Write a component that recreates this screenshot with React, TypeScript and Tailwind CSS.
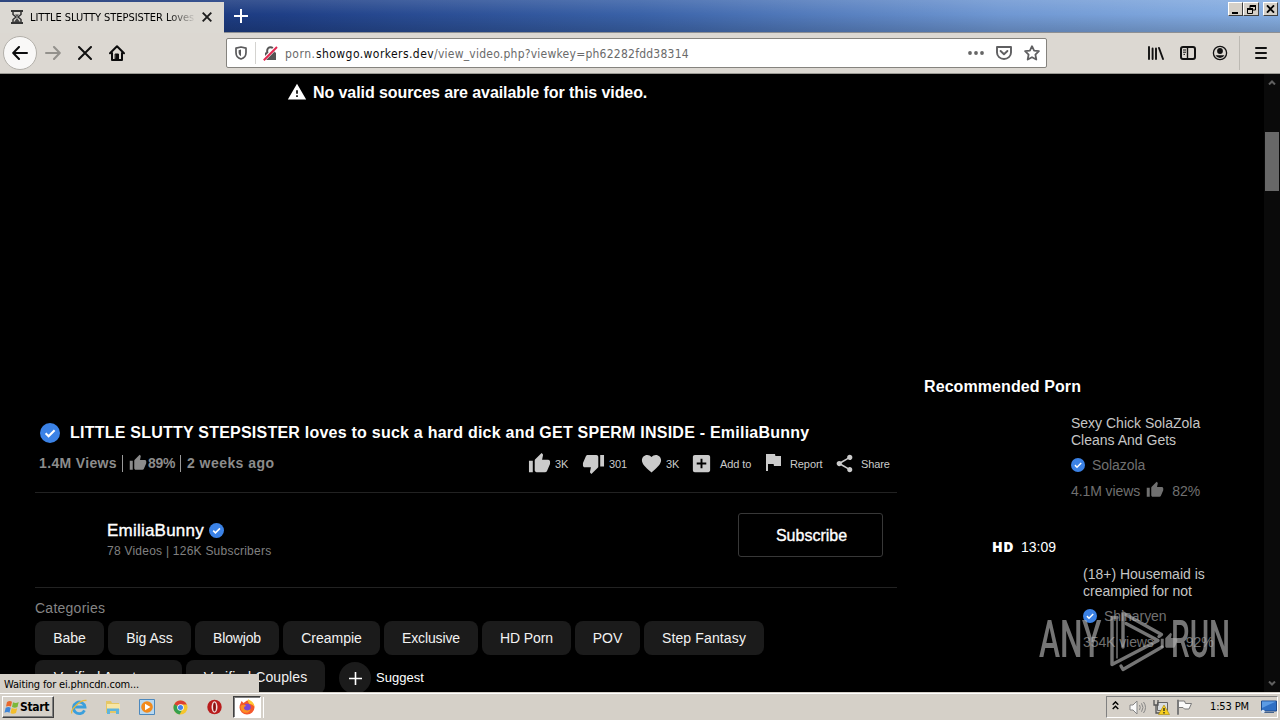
import type { ReactNode } from "react";
import {
  MdAddBox,
  MdFavorite,
  MdFlag,
  MdShare,
  MdThumbDown,
  MdThumbUp,
  MdWarning,
} from "react-icons/md";

function Verified({ size }: { size: number }) {
  return (
    <svg width={size} height={size} viewBox="0 0 20 20" className="shrink-0">
      <circle cx="10" cy="10" r="10" fill="#3b82e6" />
      <path d="M5.6 10.2l3 3 6-6" fill="none" stroke="#fff" strokeWidth="2.1" />
    </svg>
  );
}

function WindowButton({ children, className }: { children: ReactNode; className: string }) {
  return (
    <div className={`flex h-[14px] items-center justify-center border border-t-white border-l-white border-r-[#404040] border-b-[#404040] bg-[#d5d0c8] ${className}`}>
      {children}
    </div>
  );
}

function TitleBar() {
  return (
    <div className="flex h-[33px] shrink-0 items-start border-b border-[#8d8f93] bg-[linear-gradient(to_bottom,rgba(255,255,255,.12),rgba(255,255,255,0)_45%,rgba(0,0,0,.16)),linear-gradient(to_right,#15306f_0%,#1f3f86_22%,#3a62a8_50%,#6f97d2_78%,#86aee2_100%)]">
      <div className="mt-[2px] flex h-[31px] w-[224px] shrink-0 items-center bg-[#dcd9d3] font-['DejaVu_Sans_Condensed','DejaVu_Sans',sans-serif] text-[11px]">
        <svg width="12" height="14" viewBox="0 0 12 14" className="-mt-px ml-[11px]" fill="none" stroke="#333" strokeWidth="1.5">
          <path d="M0 1h12M0 13h12" strokeWidth="2" />
          <path d="M2 2v2.5L5 7 2 9.5V12M10 2v2.5L7 7l3 2.5V12" />
          <path d="M4 4.5h4L6 6.5zM6 8l3 4H3z" fill="#444" stroke="none" />
        </svg>
        <span className="mt-px ml-[7px] w-[166px] bg-linear-to-r from-black from-80% to-[#dcd9d3] bg-clip-text tracking-[-0.05px] whitespace-nowrap text-transparent">
          LITTLE SLUTTY STEPSISTER Loves
        </span>
        <svg width="10" height="10" viewBox="0 0 10 10" className="-mt-px ml-[6px]" stroke="#1c1c1c" strokeWidth="1.9">
          <path d="M.7.7l8.6 8.6M9.3.7L.7 9.3" />
        </svg>
      </div>
      <svg width="14" height="14" viewBox="0 0 14 14" className="mt-[9px] ml-[10px]" stroke="#fff" strokeWidth="2">
        <path d="M7 0v14M0 7h14" />
      </svg>
      <div className="mt-[2px] mr-[2px] ml-auto flex">
        <WindowButton className="w-[15px]">
          <svg width="9" height="9" viewBox="0 0 9 9"><path d="M1 7h6v2H1z" /></svg>
        </WindowButton>
        <WindowButton className="w-[16px]">
          <svg width="9" height="9" viewBox="0 0 9 9" fill="none" stroke="#000">
            <path d="M3 3V.5h5.500V5H6M.5 3.500h5v5h-5z" />
            <path d="M3 1h6M0 4h6" strokeWidth="2" />
          </svg>
        </WindowButton>
        <WindowButton className="ml-[4px] w-[15px]">
          <svg width="9" height="8" viewBox="0 0 9 8" stroke="#000" strokeWidth="1.8"><path d="M1 .3l7 7.400M8 .3L1 7.700" /></svg>
        </WindowButton>
      </div>
    </div>
  );
}

function NavBar() {
  return (
    <div className="flex h-[41px] shrink-0 items-center border-b border-[#9b9a94] bg-[#dcd8d2]">
      <div className="ml-[3px] flex size-[34px] shrink-0 items-center justify-center rounded-full border border-[#b3b0aa] bg-[#f9f8f7]">
        <svg width="16" height="14" viewBox="0 0 16 14" fill="none" stroke="#0c0c0d" strokeWidth="2" strokeLinecap="round" strokeLinejoin="round">
          <path d="M15 7H1.500M7 1L1.200 7 7 13" />
        </svg>
      </div>
      <svg width="16" height="14" viewBox="0 0 16 14" className="ml-[8px]" fill="none" stroke="#93918c" strokeWidth="2" strokeLinecap="round" strokeLinejoin="round">
        <path d="M1 7h13.500M9 1l5.800 6L9 13" />
      </svg>
      <svg width="14" height="14" viewBox="0 0 14 14" className="ml-[17px]" stroke="#111" strokeWidth="2" strokeLinecap="round">
        <path d="M1 1l12 12M13 1L1 13" />
      </svg>
      <svg width="16" height="16" viewBox="0 0 16 16" className="ml-[17px]" fill="none" stroke="#0c0c0d" strokeWidth="2" strokeLinejoin="round" strokeLinecap="round">
        <path d="M1 8.200L8 1.300l7 6.900M3 8v7h10V8" />
        <path d="M6.500 9h3v5h-3z" fill="#0c0c0d" strokeWidth="1" />
      </svg>
      <div className="ml-[101px] flex h-[30px] w-[821px] shrink-0 items-center rounded-[2px] border border-[#85837e] bg-white font-['DejaVu_Sans_Condensed','DejaVu_Sans',sans-serif] text-[12px] whitespace-nowrap text-[#6a6a6a]">
        <svg width="12" height="14" viewBox="0 0 12 14" className="ml-[8px]" fill="none" stroke="#5a5a5c" strokeWidth="1.700">
          <path d="M6 1L1 2.200v4.300C1 10 3.500 12.300 6 13c2.500-.7 5-3 5-6.500V2.200z" strokeLinejoin="round" />
          <path d="M6 3.600v6.600C4.500 9.500 3.600 8 3.600 6.500V4.200z" fill="#5a5a5c" stroke="none" />
        </svg>
        <span className="ml-[8px] h-[22px] w-px bg-[#d4d3d0]" />
        <svg width="15" height="15" viewBox="0 0 15 15" className="ml-[7px]" fill="none">
          <path d="M4.200 7V4.500a3.300 3.300 0 016.600 0V7" stroke="#555" strokeWidth="2" />
          <path d="M2 6.500h11V14H2z" fill="#555" />
          <path d="M.3 14.200L13.600.9" stroke="#fff" strokeWidth="3.600" />
          <path d="M.8 14.200L14 1" stroke="#e22850" strokeWidth="2" />
        </svg>
        <span className="mt-px ml-[7px] w-[31px] tracking-[0.5px]">porn.</span>
        <span className="mt-px w-[118px] tracking-[0.43px] text-[#0c0c0d]">showgo.workers.dev</span>
        <span className="mt-px tracking-[0.24px]">/view_video.php?viewkey=ph62282fdd38314</span>
        <svg width="16" height="4" viewBox="0 0 16 4" className="ml-auto" fill="#666">
          <circle cx="2" cy="2" r="1.900" /><circle cx="8" cy="2" r="1.900" /><circle cx="14" cy="2" r="1.900" />
        </svg>
        <svg width="16" height="14" viewBox="0 0 16 14" className="ml-[12px]" fill="none" stroke="#5f5f61" strokeWidth="1.900" strokeLinecap="round" strokeLinejoin="round">
          <path d="M1 1h14v5.500a7 6.500 0 01-14 0z" /><path d="M4.600 5L8 8.200 11.400 5" />
        </svg>
        <svg width="16" height="16" viewBox="0 0 16 16" className="mr-[6px] ml-[12px]" fill="none" stroke="#5f5f61" strokeWidth="1.800" strokeLinejoin="round">
          <path d="M8 1.200l2.100 4.400 4.800.6-3.500 3.400.9 4.900L8 12.200l-4.300 2.300.9-4.900L1.100 6.200l4.800-.6z" />
        </svg>
      </div>
      <svg width="16" height="14" viewBox="0 0 16 14" className="ml-[101px]" stroke="#111" strokeWidth="1.900" strokeLinecap="round">
        <path d="M1 1v12M4.600 2.500V13M8 2.500V13M11 2l4 11" />
      </svg>
      <svg width="16" height="14" viewBox="0 0 16 14" className="ml-[16px]" fill="none" stroke="#111">
        <rect x="1" y="1" width="14" height="12" rx="2" strokeWidth="2" />
        <path d="M7.500 1v12" strokeWidth="1.400" /><path d="M3 4h3M3 6.200h3M3.500 8.400H5" />
      </svg>
      <svg width="16" height="16" viewBox="0 0 16 16" className="ml-[16px]">
        <circle cx="8" cy="8" r="6.600" fill="none" stroke="#111" strokeWidth="1.300" />
        <circle cx="8" cy="6" r="2.900" fill="#111" />
        <path d="M3.500 10.200h9A5.200 5.200 0 018 13a5.200 5.200 0 01-4.500-2.800z" fill="#111" />
      </svg>
      <span className="ml-[11px] h-[34px] w-px bg-[#bcb9b3]" />
      <svg width="12" height="12" viewBox="0 0 12 12" className="ml-[15px]" stroke="#111" strokeWidth="2" strokeLinecap="round">
        <path d="M1 1h10M1 6h10M1 11h10" />
      </svg>
    </div>
  );
}

function Actions() {
  return (
    <div className="mr-[7px] ml-auto flex items-center text-[11px] text-[#cbcbcb] [&>span]:mt-px [&>span]:tracking-[-0.1px] [&>span]:whitespace-nowrap [&>svg]:shrink-0">
      <MdThumbUp size={23} />
      <span className="ml-[4px] w-[13px]">3K</span>
      <MdThumbDown size={23} className="ml-[14px]" />
      <span className="ml-[4px] w-[17px]">301</span>
      <MdFavorite size={23} className="ml-[14px]" />
      <span className="ml-[3px] w-[13px]">3K</span>
      <MdAddBox size={23} className="ml-[11px]" />
      <span className="ml-[7px] w-[32px]">Add to</span>
      <MdFlag size={24} className="-mt-[3px] ml-[9px]" />
      <span className="ml-[5px] w-[32px]">Report</span>
      <MdShare size={21} className="ml-[12px]" />
      <span className="ml-[6px] w-[29px]">Share</span>
    </div>
  );
}

function Chip({ children, className }: { children: ReactNode; className: string }) {
  return (
    <div className={`flex h-[34px] shrink-0 items-center justify-center rounded-[8px] bg-[#1b1b1b] text-[14px] whitespace-nowrap text-[#f2f2f2] ${className}`}>
      {children}
    </div>
  );
}

function MainColumn() {
  return (
    <div className="flex w-[897px] shrink-0 flex-col pl-[35px]">
      <div className="flex h-[36px] shrink-0 items-center pt-[2px] pl-[252px] text-[16px] font-bold tracking-[-0.08px] text-white">
        <MdWarning size={20} className="mr-[6px] -mt-[3px]" />
        No valid sources are available for this video.
      </div>
      <div className="mt-[310px] flex h-[24px] shrink-0 items-center pt-[2px] pl-[5px] text-[16px] font-bold tracking-[0.23px] whitespace-nowrap text-white">
        <Verified size={20} />
        <h1 className="ml-[10px]">LITTLE SLUTTY STEPSISTER loves to suck a hard dick and GET SPERM INSIDE - EmiliaBunny</h1>
      </div>
      <div className="flex h-[49px] shrink-0 items-center border-b border-[#222] pb-[9px] pl-[4px] text-[14px] font-bold whitespace-nowrap text-[#8c8c8c] [&_span]:shrink-0">
        <span className="w-[78px] tracking-[0.35px]">1.4M Views</span>
        <span className="ml-[5px] h-[17px] w-px bg-[#9a9a9a]" />
        <MdThumbUp size={18} className="ml-[6px] -mt-[2px] shrink-0" />
        <span className="ml-px w-[27px] tracking-[-0.34px]">89%</span>
        <span className="ml-[5px] h-[17px] w-px bg-[#9a9a9a]" />
        <span className="ml-[6px] tracking-[0.45px]">2 weeks ago</span>
        <div className="ml-auto flex font-normal"><Actions /></div>
      </div>
      <div className="flex h-[95px] shrink-0 items-start border-b border-[#222] pr-[14px] pl-[72px]">
        <div className="pt-[28px]">
          <div className="flex h-[20px] items-center text-[17px] tracking-[0.22px] text-white [-webkit-text-stroke:0.35px_white]">
            EmiliaBunny
            <span className="-mt-px ml-[5px] flex"><Verified size={15} /></span>
          </div>
          <div className="mt-[2px] h-[16px] text-[12px] leading-[16px] tracking-[0.24px] text-[#808080]">78 Videos | 126K Subscribers</div>
        </div>
        <div className="mt-[20px] ml-auto flex h-[44px] w-[145px] items-center justify-center rounded-[3px] border border-[#383838] pt-[2px] pl-[2px] text-[16px] text-white [-webkit-text-stroke:0.35px_white]">
          Subscribe
        </div>
      </div>
      <div className="h-[33px] shrink-0 pt-[10px] text-[14px] leading-[20px] tracking-[0.25px] text-[#858585]">Categories</div>
      <div className="flex shrink-0 gap-[4px]">
        <Chip className="w-[69px]">Babe</Chip>
        <Chip className="w-[83px]">Big Ass</Chip>
        <Chip className="w-[84px] tracking-[-0.15px]">Blowjob</Chip>
        <Chip className="w-[97px]">Creampie</Chip>
        <Chip className="w-[94px] tracking-[-0.13px]">Exclusive</Chip>
        <Chip className="w-[89px] tracking-[-0.1px]">HD Porn</Chip>
        <Chip className="w-[65px]">POV</Chip>
        <Chip className="w-[120px] tracking-[0.13px]">Step Fantasy</Chip>
      </div>
      <div className="mt-[5px] flex shrink-0 gap-[4px]">
        <Chip className="w-[147px]">Verified Amateurs</Chip>
        <Chip className="w-[139px] tracking-[0.1px]">Verified Couples</Chip>
        <div className="mt-[2px] ml-[10px] flex h-[32px] items-center text-[13px] tracking-[0.02px] text-white">
          <span className="mr-[5px] flex size-[32px] items-center justify-center rounded-full bg-[#1b1b1b]">
            <svg width="13" height="13" viewBox="0 0 13 13" stroke="#fff" strokeWidth="1.600"><path d="M6.500 0v13M0 6.500h13" /></svg>
          </span>
          Suggest
        </div>
      </div>
    </div>
  );
}

function VideoInfo({ lines, author, views, rating, className }: { lines: string[]; author: string; views: string; rating: string; className: string }) {
  return (
    <div className={`text-[14px] whitespace-nowrap text-[#707070] ${className}`}>
      <div className="leading-[17px] text-[#c6c6c6]">
        {lines.map((line) => <div key={line}>{line}</div>)}
      </div>
      <div className="mt-[6px] flex h-[20px] items-center gap-[7px] tracking-[-0.05px]"><Verified size={14} />{author}</div>
      <div className="mt-[6px] flex h-[20px] items-center tracking-[-0.08px]">
        {views}
        <MdThumbUp size={18} className="mr-[8px] ml-[6px] -mt-[2px]" />
        {rating}
      </div>
    </div>
  );
}

function Sidebar() {
  return (
    <div className="flex w-[367px] shrink-0 flex-col pt-[303px] pl-[27px]">
      <h2 className="h-[20px] text-[16px] leading-[20px] font-bold tracking-[0.09px] text-white">Recommended Porn</h2>
      <VideoInfo className="mt-[18px] ml-[147px]" lines={["Sexy Chick SolaZola", "Cleans And Gets"]} author="Solazola" views="4.1M views" rating="82%" />
      <div className="mt-[36px] ml-[68px] flex h-[20px] items-center text-[14px] text-white">
        <span className="-mt-px w-[29px] font-['Open_Sans',sans-serif] font-extrabold tracking-[0.5px]">HD</span>13:09
      </div>
      <VideoInfo className="mt-[9px] ml-[159px]" lines={["(18+) Housemaid is", "creampied for not"]} author="Shinaryen" views="354K views" rating="92%" />
    </div>
  );
}

function Watermark() {
  return (
    <div className="absolute top-[536px] left-[1030px] flex h-[60px] w-[210px] items-center font-['Roboto',sans-serif] text-[52px] leading-[60px] font-medium text-[#b4b4b4] opacity-65">
      <span className="ml-[9px] w-[64px] origin-left scale-x-[0.61]">ANY</span>
      <svg width="62" height="64" viewBox="78 8 62 64" className="mr-[3px] ml-[4px] shrink-0" fill="none" stroke="#b4b4b4" strokeWidth="3.400" strokeLinecap="round" strokeLinejoin="round">
        <path d="M94 47V13l38.500 21.500-2.500 2" />
        <path d="M88 17.500h-5v47l46-24L97 23.500" />
        <path d="M88 58V18" strokeWidth="1.500" />
        <path d="M92 66l2 3.500L133 47" />
      </svg>
      <span className="-ml-px w-[60px] origin-left scale-x-[0.57]">RUN</span>
    </div>
  );
}

function Scrollbar() {
  return (
    <div className="flex w-[16px] shrink-0 flex-col items-center bg-[#0a0a0a]">
      <svg width="8" height="5" viewBox="0 0 8 5" className="mt-[6px]" fill="none" stroke="#606060" strokeWidth="2"><path d="M1 4.500l3-3 3 3" /></svg>
      <div className="mt-[47px] h-[59px] w-[14px] bg-[#686868]" />
      <svg width="8" height="5" viewBox="0 0 8 5" className="mt-auto mb-[6px]" fill="none" stroke="#606060" strokeWidth="2"><path d="M1 .5l3 3 3-3" /></svg>
    </div>
  );
}

function Taskbar() {
  return (
    <div className="flex h-[28px] shrink-0 items-center border-t border-[#d5d0c8] bg-[#d5d0c8] pt-px font-['DejaVu_Sans_Condensed','DejaVu_Sans',sans-serif] text-[11px] shadow-[inset_0_1px_0_#fff]">
      <div className="ml-[2px] flex h-[22px] w-[52px] items-center border border-t-white border-l-white border-r-[#404040] border-b-[#404040] pl-px text-[12px] font-bold shadow-[inset_-1px_-1px_0_#808080]">
        <svg width="16" height="15" viewBox="0 0 16 15">
          <path d="M3 2c2-1.300 3.600-1.200 5-.2L7 6.600C5.500 5.700 4 5.700 2 6.600z" fill="#e8682c" />
          <path d="M9 2.200c1.800 1 3.500 1 5.700-.1l-1.200 5c-2 1-3.600.9-5.500-.1z" fill="#7cb83a" />
          <path d="M1.700 7.700c2-.9 3.500-.9 5 0l-1.200 5c-1.500-1-3.100-1-5 0z" fill="#3f86d8" />
          <path d="M7.700 8.100c1.900 1 3.500 1 5.500.1l-1.200 4.900c-2 .9-3.700.9-5.500-.2z" fill="#f3be2c" />
        </svg>
        <span className="tracking-[-0.34px]">Start</span>
      </div>
      <svg width="18" height="18" viewBox="0 0 18 18" className="ml-[16px]" fill="none">
        <path d="M14.500 12.300a5.800 5.800 0 11.500-3.300H5" stroke="#3b9fdc" strokeWidth="2.800" />
        <path d="M2 15.500C-1 13 10 1.500 16.500 2.500" stroke="#e9b93a" strokeWidth="1.300" />
      </svg>
      <svg width="16" height="16" viewBox="0 0 16 16" className="ml-[17px]">
        <path d="M1 2h5l1 2h7v10H1z" fill="#e5c766" /><path d="M2 5h13v5H2z" fill="#f8e6a4" />
        <path d="M2 15V9.500h12V15h-3v-3H5v3z" fill="#5fb4dc" />
      </svg>
      <svg width="16" height="16" viewBox="0 0 16 16" className="ml-[18px]">
        <path d="M.5.500h15v15H.5z" fill="#b8d8f0" stroke="#4c88bd" /><circle cx="8" cy="8" r="5.800" fill="#f28a1c" /><path d="M6 4.700L11.500 8 6 11.300z" fill="#fff" />
      </svg>
      <svg width="15" height="15" viewBox="0 0 16 16" className="ml-[18px]">
        <circle cx="8" cy="8" r="7.500" fill="#f5c52c" /><path d="M8 8L1.300 4.700a7.500 7.500 0 0113.400 0H8z" fill="#dd4034" /><path d="M8 8L1.300 4.600A7.500 7.500 0 007 15.400l2.500-4.500z" fill="#36a04e" />
        <circle cx="8" cy="8" r="3.500" fill="#fff" /><circle cx="8" cy="8" r="2.700" fill="#4283ea" />
      </svg>
      <svg width="15" height="16" viewBox="0 0 16 16" className="ml-[19px]">
        <ellipse cx="8" cy="8" rx="7.700" ry="7.800" fill="#b91c1c" /><ellipse cx="8" cy="8" rx="3.200" ry="6.200" fill="#f3e0e0" /><ellipse cx="8" cy="8" rx="1.500" ry="4.800" fill="#8b1010" />
      </svg>
      <div className="ml-[11px] flex h-[22px] w-[28px] items-center justify-center border border-t-[#404040] border-l-[#404040] border-r-white border-b-white bg-white shadow-[inset_1px_1px_0_#808080]">
        <svg width="16" height="16" viewBox="0 0 16 16">
          <path d="M8 1.500c4 0 7.500 3 7.500 7A7.300 7.300 0 018 15.500 7.300 7.300 0 01.5 8.500C.5 5.500 2 4 2.500 2l2 2z" fill="#f5572c" />
          <path d="M9 .3c4 1.700 6.500 4.500 6.500 8C15 6.500 12.500 5 10.500 5 9 3.500 8.500 2 9 .3z" fill="#ffc931" /><circle cx="8.300" cy="8.300" r="3.500" fill="#7b49d6" />
          <path d="M1.500 7c2-2 4-1.500 6 0-2 0-2.500 1-2.500 2.500 1 2.500 5 2.500 6.500.5-.5 3.500-4 4.500-6.500 3.500C2.500 12.500 1.300 10 1.500 7z" fill="#fc8f24" />
        </svg>
      </div>
      <span className="ml-[2px] h-[21px] w-px bg-white" />
      <div className="mr-[2px] ml-auto flex h-[22px] w-[172px] items-center border border-t-[#808080] border-l-[#808080] border-r-white border-b-white whitespace-nowrap">
        <svg width="7" height="9" viewBox="0 0 7 9" className="-mt-[3px] ml-[5px]" fill="none" stroke="#000" strokeWidth="1.400"><path d="M.7 3.700l2.800-2.800 2.800 2.800M.7 8l2.800-2.800L6.300 8" /></svg>
        <svg width="17" height="15" viewBox="0 0 17 15" className="ml-[10px]" fill="none">
          <path d="M1 5h3l4-4v13l-4-4H1z" fill="#fafafa" stroke="#858585" /><path d="M10.500 5q1.500 2.500 0 5M12.500 3.300q3 4.200 0 8.400M14.500 2q4 5.500 0 11" stroke="#858585" />
        </svg>
        <svg width="17" height="16" viewBox="0 0 17 16" className="ml-[7px]">
          <path d="M4.500 3.500h10v8h-10z" fill="#d9dde0" stroke="#666" /><path d="M1 1v5h4V1M3 6v8h5" fill="none" stroke="#555" strokeWidth="1.300" />
          <path d="M11 6l5.500 9.500h-11z" fill="#f7cf1f" stroke="#a48505" strokeWidth=".6" /><path d="M11 9v3M11 13v1.500" stroke="#222" strokeWidth="1.300" />
        </svg>
        <svg width="17" height="16" viewBox="0 0 17 16" className="ml-[6px]" fill="#fafafa" stroke="#7a7a7a">
          <path d="M2.500 1v14.500h-1V1zM2.500 2h6l1 2.500h6L13 10H8.500L7 8.500H2.500z" />
        </svg>
        <span className="mt-px ml-[17px] w-[39px] tracking-[-0.13px]">1:53 PM</span>
        <svg width="16" height="14" viewBox="0 0 16 14" className="ml-[12px]">
          <path d="M.5 1h15v10H.5z" fill="#2f6fc4" stroke="#1f4b8c" /><path d="M1 1.500h14L1 8z" fill="#5c9be4" /><path d="M3 12.500h10" stroke="#45638c" /><circle cx="2" cy="11.500" r="1.800" fill="#dde7f2" />
        </svg>
      </div>
    </div>
  );
}

export default function App() {
  return (
    <div className="flex h-[720px] w-[1280px] flex-col overflow-hidden bg-[#d5d0c8] font-['Liberation_Sans',sans-serif] text-black">
      <TitleBar />
      <NavBar />
      <div className="relative flex h-[618px] shrink-0 overflow-hidden bg-black">
        <MainColumn />
        <Sidebar />
        <Scrollbar />
        <Watermark />
        <div className="absolute bottom-0 left-0 h-[18px] w-[259px] bg-[#d5d0c8] pl-[4px] font-['DejaVu_Sans_Condensed','DejaVu_Sans',sans-serif] text-[11px] leading-[21px] tracking-[-0.16px] whitespace-nowrap">
          Waiting for ei.phncdn.com...
        </div>
      </div>
      <Taskbar />
    </div>
  );
}
